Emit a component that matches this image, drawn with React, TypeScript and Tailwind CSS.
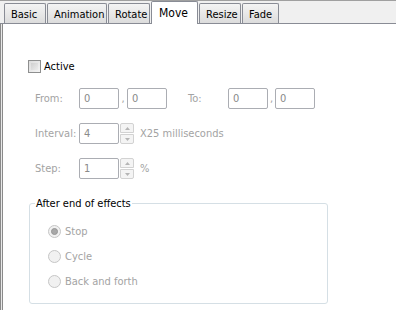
import React from 'react'

const tabs = [
  { name: 'Basic', w: 'w-[42px]' },
  { name: 'Animation', w: 'w-[60px]' },
  { name: 'Rotate', w: 'w-[42px]' },
  { name: 'Move', w: 'w-[47px]', active: true },
  { name: 'Resize', w: 'w-[42px]' },
  { name: 'Fade', w: 'w-[37px]' },
]

function Field({ value, w = 'w-[40px]' }: { value: string; w?: string }) {
  return (
    <div className={`${w} h-[21px] border border-[#abadb3] rounded-[2px] bg-white flex items-center pl-[4px] text-[#8a8a8a]`}>
      {value}
    </div>
  )
}

function Spinner() {
  return (
    <div className="flex flex-col ml-[1px] h-[21px] w-[14px]">
      <div className="h-[10px] border border-[#d2d2d2] rounded-t-[2px] bg-[#f4f4f4] flex items-center justify-center">
        <svg width="5" height="3" viewBox="0 0 5 3"><path d="M0 3 L2.5 0 L5 3 Z" fill="#b5b5b5" /></svg>
      </div>
      <div className="h-[10px] mt-[1px] border border-[#d2d2d2] rounded-b-[2px] bg-[#f4f4f4] flex items-center justify-center">
        <svg width="5" height="3" viewBox="0 0 5 3"><path d="M0 0 L2.5 3 L5 0 Z" fill="#b5b5b5" /></svg>
      </div>
    </div>
  )
}

function Radio({ label, checked }: { label: string; checked?: boolean }) {
  return (
    <div className="flex items-center h-[13px]">
      <div className="w-[13px] h-[13px] rounded-full border border-[#c6c6c6] bg-[#f1f1f1] flex items-center justify-center">
        {checked && <div className="w-[7px] h-[7px] rounded-full bg-[#a8a8a8] border border-[#969696]" />}
      </div>
      <span className="ml-[4px] text-[#a3a3a3]">{label}</span>
    </div>
  )
}

export default function App() {
  return (
    <div
      className="w-[396px] h-[310px] overflow-hidden bg-white flex flex-col text-[11px] leading-none"
      style={{ fontFamily: '"DejaVu Sans Condensed", "Liberation Sans", sans-serif' }}
    >
      <div className="h-[24px] bg-[#f0f0f0] border-t border-[#a0a0a0] border-b border-b-[#898c95] flex items-end pl-[4px] gap-[1px] shrink-0">
        {tabs.map((t) =>
          t.active ? (
            <div
              key={t.name}
              className={`${t.w} h-[23px] -mb-px bg-white border border-b-0 border-[#898c95] rounded-t-[2px] pl-[7px] pt-[5px] text-black text-[12px]`}
            >
              {t.name}
            </div>
          ) : (
            <div
              key={t.name}
              className={`${t.w} h-[20px] bg-gradient-to-b from-[#f4f4f4] to-[#dcdcdc] border border-b-0 border-[#898c95] rounded-t-[2px] pl-[6px] pt-[5px] text-black`}
            >
              {t.name}
            </div>
          )
        )}
      </div>

      <div className="flex-1 flex border-l border-[#8a8a8a]">
        <div className="w-[1px] bg-[#e8e8e8]" />
        <div className="w-[1px] bg-[#8a8a8a]" />
        <div className="flex-1 flex flex-col pl-[25px] pt-[36px]">
          <div className="flex items-center">
            <div className="w-[13px] h-[13px] border border-[#8e8f8f] bg-gradient-to-br from-[#dcdcdc] to-[#f4f4f4] p-[2px]">
              <div className="w-full h-full bg-gradient-to-br from-[#cfcfcf] to-[#ececec]" />
            </div>
            <span className="ml-[3px] text-black">Active</span>
          </div>

          <div className="flex items-center mt-[15px] pl-[7px] text-[#a3a3a3]">
            <span className="w-[44px]">From:</span>
            <Field value="0" />
            <span className="w-[8px] text-center">,</span>
            <Field value="0" />
            <span className="w-[21px]" />
            <span className="w-[40px]">To:</span>
            <Field value="0" />
            <span className="w-[7px] text-center">,</span>
            <Field value="0" />
          </div>

          <div className="flex items-center mt-[14px] pl-[7px] text-[#a3a3a3]">
            <span className="w-[44px]">Interval:</span>
            <Field value="4" />
            <Spinner />
            <span className="ml-[6px]">X25 milliseconds</span>
          </div>

          <div className="flex items-center mt-[14px] pl-[7px] text-[#a3a3a3]">
            <span className="w-[44px]">Step:</span>
            <Field value="1" />
            <Spinner />
            <span className="ml-[6px]">%</span>
          </div>

          <div className="relative mt-[24px] ml-[1px] w-[299px] h-[101px] border border-[#d5dfe5] rounded-[3px] flex flex-col pl-[18px] pt-[21px] gap-[12px]">
            <span className="absolute -top-[6px] left-[5px] bg-white px-[1px] text-black">After end of effects</span>
            <Radio label="Stop" checked />
            <Radio label="Cycle" />
            <Radio label="Back and forth" />
          </div>
        </div>
      </div>
    </div>
  )
}
